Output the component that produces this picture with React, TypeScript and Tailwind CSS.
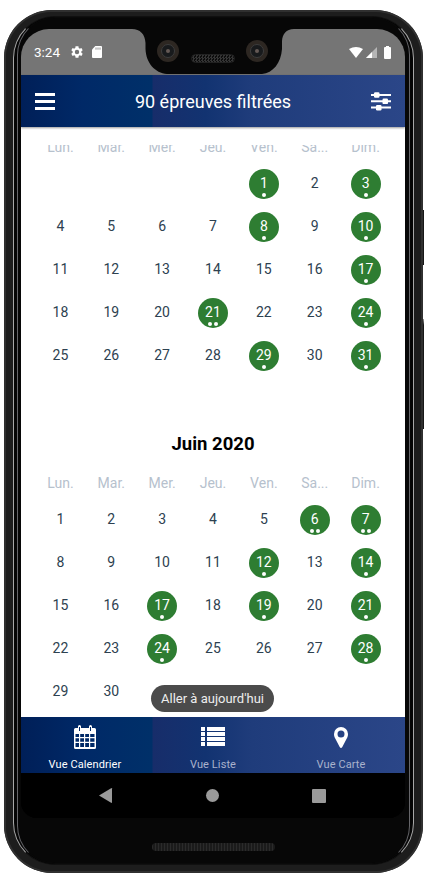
import { ReactNode } from "react";

const weekdays = ["Lun.", "Mar.", "Mer.", "Jeu.", "Ven.", "Sa...", "Dim."];

function WeekHeader() {
  return (
    <div className="grid h-[20px] grid-cols-7 text-center text-[14px] leading-[20px] text-[#b6c1cd]">
      {weekdays.map((d) => (
        <span key={d}>{d}</span>
      ))}
    </div>
  );
}

function Month({ offset, days, events }: { offset: number; days: number; events: Record<number, number> }) {
  return (
    <div className="grid auto-rows-[43px] grid-cols-7 text-[14px] text-[#2d4150]">
      {Array.from({ length: offset }, (_, i) => (
        <span key={"e" + i} />
      ))}
      {Array.from({ length: days }, (_, i) => {
        const day = i + 1;
        const dots = events[day] ?? 0;
        return (
          <div
            key={day}
            className={
              dots
                ? "flex size-[30px] flex-col items-center justify-self-center rounded-full bg-[#2e7d32] pt-[5px] text-white"
                : "flex size-[30px] flex-col items-center justify-self-center pt-[5px]"
            }
          >
            <span className="h-[18px] leading-[18px]">{day}</span>
            <span className="flex gap-[2px] pt-[1px]">
              {Array.from({ length: dots }, (_, k) => (
                <i key={k} className="size-[4px] rounded-full bg-white" />
              ))}
            </span>
          </div>
        );
      })}
    </div>
  );
}

const brand =
  "bg-[linear-gradient(90deg,#001f58_0%,#002967_16%,#003069_34%,#172d6a_34.5%,#123371_48%,#1f3c7b_60%,#2b4688_100%)]";

function Camera() {
  return (
    <span className="flex size-[22px] items-center justify-center rounded-full bg-[#2d2722]">
      <span className="flex size-[14px] items-center justify-center rounded-full border border-[#3d3d3d] bg-[#181a1c]">
        <span className="size-[4px] rounded-full bg-[#655955]" />
      </span>
    </span>
  );
}

function StatusBar() {
  return (
    <div className="relative flex h-[46px] shrink-0 items-center justify-between bg-[#757575] text-white">
      <div className="flex items-center pl-[13px]">
        <span className="w-[37px] text-[13.5px]">3:24</span>
        <svg className="size-[12px]" viewBox="3 2.500 19 19" fill="currentColor">
          <path d="M19.4 13a7.5 7.5 0 0 0 0-2l2.1-1.7-2-3.5-2.6 1a8 8 0 0 0-1.7-1L14.8 3h-4.6l-.4 2.8a8 8 0 0 0-1.700 1l-2.600-1-2 3.500L5.600 11a7.500 7.500 0 0 0 0 2l-2.100 1.700 2 3.500 2.600-1a8 8 0 0 0 1.700 1l.4 2.800h4.600l.4-2.800a8 8 0 0 0 1.700-1l2.600 1 2-3.500zM12.500 15.500a3.500 3.500 0 1 1 0-7 3.500 3.500 0 0 1 0 7z" />
        </svg>
        <svg className="ml-[9px] h-[12px] w-[10px]" viewBox="0 0 10 12">
          <path fill="white" d="M3.300 0H9q1 0 1 1v10q0 1-1 1H1q-1 0-1-1V3.500z" />
          <path stroke="#757575" strokeWidth=".8" d="M4 1.500v2.200M6 1.500v2.200M8 1.500v2.200" />
        </svg>
      </div>
      <div className="flex items-center pr-[14px]">
        <svg className="h-[11px] w-[14px]" viewBox="0 0 14 11">
          <path fill="white" d="M7 11 0 2Q7-2 14 2z" />
        </svg>
        <svg className="ml-[3px] size-[11px]" viewBox="0 0 11 11">
          <path fill="#b5b5b5" d="M11 0v11H0z" />
          <path fill="white" d="M6 5v6H0z" />
        </svg>
        <svg className="ml-[7px] h-[13px] w-[7px]" viewBox="0 0 7 13">
          <path fill="white" d="M2 0h3v1h1q1 0 1 1v10q0 1-1 1H1q-1 0-1-1V2q0-1 1-1h1z" />
        </svg>
      </div>
      <svg className="absolute left-[110px] top-0 h-[45px] w-[174px]" viewBox="0 0 174 45" fill="#070707">
        <path d="M1 0H163C155 0 151.500 5 151 12V20C150 34 142 44 131 45H36C24 44 15 34 14.500 20V14C14 5 9 0 1 0z" />
      </svg>
      <div className="absolute left-[136px] top-[10px] flex w-[111px] items-center justify-between">
        <Camera />
        <span className="mt-[15px] h-[9px] w-[44px] rounded-full border border-[#222] bg-[repeating-conic-gradient(#343434_0_25%,#0c0c0c_0_50%)] bg-[length:3px_3px]" />
        <Camera />
      </div>
    </div>
  );
}

function Tab({ label, active, children }: { label: string; active?: boolean; children: ReactNode }) {
  return (
    <div className="flex flex-1 flex-col items-center pt-[7px] text-white">
      <div className="flex h-[26px] items-center">{children}</div>
      <span
        className={
          active
            ? "mt-[7px] text-[11px] leading-[16px] tracking-[0.1px]"
            : "mt-[7px] text-[11px] leading-[16px] tracking-[0.1px] text-[#a9b2cc]"
        }
      >
        {label}
      </span>
    </div>
  );
}

export default function App() {
  return (
    <main className="relative h-[887px] w-[424px] overflow-hidden bg-white pl-[4px] pt-[10px] font-['Roboto',sans-serif]">
      <div className="absolute left-[421px] top-[210px] h-[55px] w-[3px] bg-[#171717]" />
      <div className="absolute left-[421px] top-[319px] h-[110px] w-[3px] bg-[linear-gradient(180deg,#a0a0a0,#171717_6px)]" />
      <div className="relative h-[863px] w-[419px] rounded-[48px] bg-[#242424] p-[2px] shadow-[inset_0_0_0_2px_#303030]">
        <div className="h-full rounded-[46px] bg-[#1d1d1d] px-[7px] pb-[6px] pt-[4px]">
          <div className="h-full rounded-[42px] border border-x-[#a8a8a8] border-y-[#101010] bg-[#050505] px-[3px]">
            <div className="h-full rounded-[38px] border border-x-[#66666a] border-y-[#0a0a0a] bg-[#070707] pl-[3px] pr-[4px] pt-[11px]">
              <div className="flex h-[789px] flex-col overflow-hidden rounded-b-[16px] rounded-t-[28px] bg-black">
                <StatusBar />
                <header className={"z-10 flex h-[52px] shrink-0 items-center px-[14px] text-white shadow-[0_1px_2px_#0006] " + brand}>
                  <div className="flex w-[20px] flex-col gap-[4px]">
                    <span className="h-[3px] bg-white" />
                    <span className="h-[3px] bg-white" />
                    <span className="h-[3px] bg-white" />
                  </div>
                  <h1 className="flex-1 text-center text-[18px]">90 épreuves filtrées</h1>
                  <svg className="h-[20px] w-[20px]" viewBox="0 0 20 20" fill="white">
                    <path d="M0 3h20v2H0zM0 9.300h20v2H0zM0 15.600h20v2H0z" />
                    <rect x="3" y="1.300" width="5.500" height="5.500" rx="1.200" />
                    <rect x="11.500" y="7.600" width="5.500" height="5.500" rx="1.200" />
                    <rect x="5" y="13.900" width="5.500" height="5.500" rx="1.200" />
                  </svg>
                </header>
                <section className="relative h-[590px] shrink-0 overflow-hidden bg-white px-[14px] pt-[18px]">
                  <div className="h-[24px] overflow-hidden">
                    <div className="-mt-[8px]">
                      <WeekHeader />
                    </div>
                  </div>
                  <Month offset={4} days={31} events={{ 1: 1, 3: 1, 8: 1, 10: 1, 17: 1, 21: 2, 24: 1, 29: 1, 31: 1 }} />
                  <h2 className="mt-[47px] text-center text-[18.5px] font-bold leading-[26px] text-black">Juin 2020</h2>
                  <div className="mb-[12px] mt-[16px]">
                    <WeekHeader />
                  </div>
                  <Month offset={0} days={30} events={{ 6: 2, 7: 2, 12: 1, 14: 1, 17: 1, 19: 1, 21: 1, 24: 1, 28: 1 }} />
                  <button className="absolute bottom-[5px] left-[130px] h-[27px] w-[123px] rounded-full bg-[#4b4b4b] text-[13px] leading-[27px] text-[#eeeeee]">
                    Aller à aujourd'hui
                  </button>
                </section>
                <nav className={"flex h-[56px] shrink-0 " + brand}>
                  <Tab label="Vue Calendrier" active>
                    <svg className="h-[24px] w-[22px]" viewBox="0 0 22 24" fill="white">
                      <path
                        fillRule="evenodd"
                        d="M1.500 3H4V1.500Q4 0 5.500 0T7 1.500V3h8V1.500Q15 0 16.500 0T18 1.500V3h2.500Q22 3 22 4.500v18q0 1.500-1.500 1.500h-19Q0 24 0 22.500v-18Q0 3 1.500 3zM5 2v4h1V2zm11 0v4h1V2zM1.500 9v3H5V9zm4.700 0v3H10V9zm5 0v3H15V9zm5 0v3h4.300V9zM1.500 13.300v3.500H5v-3.500zm4.700 0v3.500H10v-3.500zm5 0v3.500H15v-3.500zm5 0v3.500h4.300v-3.500zM1.500 18v4H5v-4zm4.700 0v4H10v-4zm5 0v4H15v-4zm5 0v4h4.300v-4z"
                      />
                    </svg>
                  </Tab>
                  <Tab label="Vue Liste">
                    <svg className="-mt-[2px] h-[19px] w-[24px]" viewBox="0 0 24 19" fill="white">
                      <path d="M0 0h4v4H0zM6 0h18v4H6zM0 5h4v4H0zM6 5h18v4H6zM0 10h4v4H0zM6 10h18v4H6zM0 15h4v4H0zM6 15h18v4H6z" />
                    </svg>
                  </Tab>
                  <Tab label="Vue Carte">
                    <svg className="h-[21px] w-[14px]" viewBox="0 0 14 21" fill="white">
                      <path
                        fillRule="evenodd"
                        d="M7 0a7 7 0 0 1 7 7q0 2-.6 3.200L8.300 20q-1.300 2-2.600 0L.6 10.200Q0 9 0 7a7 7 0 0 1 7-7zm0 3.500a3.500 3.500 0 1 0 0 7 3.500 3.500 0 0 0 0-7z"
                      />
                    </svg>
                  </Tab>
                </nav>
                <div className="flex h-[45px] shrink-0 items-center justify-between bg-black pl-[78px] pr-[79px] text-[#9a9a9a]">
                  <svg className="h-[15px] w-[14px]" viewBox="0 0 14 15" fill="currentColor">
                    <path d="M0 7.500 12.500 0 13 .5v14l-.5.5z" />
                  </svg>
                  <span className="size-[13px] rounded-full bg-[#9a9a9a]" />
                  <span className="size-[14px] rounded-[1px] bg-[#9a9a9a]" />
                </div>
              </div>
              <div className="mx-auto mt-[25px] h-[8px] w-[123px] rounded-full bg-[#222] bg-[repeating-linear-gradient(90deg,#2b2b2b_0_1px,#1b1b1b_1px_3px)]" />
            </div>
          </div>
        </div>
      </div>
    </main>
  );
}
